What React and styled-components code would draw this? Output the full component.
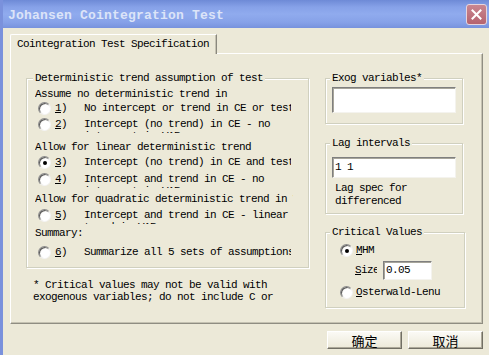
import React from 'react';
import styled, { createGlobalStyle } from 'styled-components';

const GlobalStyle = createGlobalStyle`
  html, body {
    margin: 0;
    padding: 0;
    background: #ece9d8;
  }
  body {
    font-family: "Liberation Mono", "Noto Sans CJK SC", monospace;
    font-size: 11px;
    letter-spacing: -0.6px;
    color: #000;
  }
  * {
    box-sizing: border-box;
  }
`;

const Window = styled.div`
  width: 489px;
  height: 355px;
  overflow: hidden;
  border-left: 3px solid #7a91dc;
  display: flex;
  flex-direction: column;
  background: #ece9d8;
`;

const TitleBar = styled.div`
  height: 28px;
  flex: none;
  display: flex;
  align-items: center;
  justify-content: space-between;
  padding: 2px 2px 0 5px;
  background: linear-gradient(to bottom, #6e8ad6 0%, #86a1e8 25%, #90abee 50%, #86a1e8 80%, #7792dd 100%);
`;

const Title = styled.div`
  font-size: 13px;
  font-weight: bold;
  letter-spacing: 0.2px;
  color: #dce4f8;
`;

const CloseButton = styled.div`
  width: 21px;
  height: 21px;
  margin-top: -1px;
  border: 1px solid #e6d4dc;
  border-radius: 3px;
  background: linear-gradient(to bottom, #c98690, #b5636f);
  display: flex;
  align-items: center;
  justify-content: center;
`;

const Body = styled.div`
  flex: 1;
  display: flex;
  flex-direction: column;
  padding: 6px 0 0 7px;
`;

const TabStrip = styled.div`
  display: flex;
`;

const Tab = styled.div`
  position: relative;
  z-index: 1;
  width: 207px;
  height: 20px;
  margin-bottom: -1px;
  padding: 3px 0 0 6px;
  line-height: 12px;
  background: #ece9d8;
  border-top: 1px solid #fff;
  border-left: 1px solid #fff;
  border-right: 1px solid #8a887e;
  border-top-left-radius: 2px;
  box-shadow: inset -1px 0 0 #c5c2b2;
`;

const Panel = styled.div`
  width: 473px;
  height: 271px;
  border-top: 1px solid #fff;
  border-left: 1px solid #fff;
  border-right: 1px solid #8f8d82;
  border-bottom: 1px solid #8f8d82;
  box-shadow: inset -1px -1px 0 #c5c2b2;
  padding: 24px 0 0 15px;
  display: grid;
  grid-template-columns: 283px 140px;
  column-gap: 16px;
  align-items: start;
`;

const Column = styled.div`
  display: flex;
  flex-direction: column;
  align-items: flex-start;
`;

const Group = styled.div`
  width: ${p => p.$w}px;
  margin-top: ${p => p.$mt || 0}px;
  padding: 0 ${p => p.$px}px ${p => p.$pb}px;
  border: 1px solid #d0d0bf;
  box-shadow: inset 1px 1px 0 #fff, 1px 1px 0 #fff;
  display: flex;
  flex-direction: column;
  align-items: flex-start;
`;

const Legend = styled.div`
  height: 14px;
  line-height: 14px;
  margin: -8px 0 0 -2px;
  padding: 0 2px;
  background: #ece9d8;
`;

const Heading = styled.div`
  width: 258px;
  height: 14px;
  line-height: 14px;
  margin-top: ${p => p.$mt}px;
  white-space: nowrap;
  overflow: hidden;
`;

const Option = styled.div`
  display: flex;
  align-items: flex-start;
  height: ${p => p.$h}px;
  margin-top: ${p => p.$mt}px;
  margin-left: ${p => p.$ml ?? 3}px;
`;

const Radio = styled.div`
  width: 13px;
  height: 13px;
  flex: none;
  border-radius: 50%;
  border: 1px solid;
  border-color: #8c8c8c #f4f4f4 #f4f4f4 #8c8c8c;
  background: radial-gradient(circle at 60% 60%, #fff 0 45%, #e4e2da 80%);
  box-shadow: inset 1px 1px 0 #5a5a5a;
  display: flex;
  align-items: center;
  justify-content: center;

  &::after {
    content: "";
    display: ${p => (p.$checked ? 'block' : 'none')};
    width: 4px;
    height: 4px;
    margin: 1px 0 0 1px;
    border-radius: 50%;
    background: #000;
  }
`;

const Key = styled.div`
  width: 29px;
  flex: none;
  margin-left: 4px;
  line-height: 12px;
`;

const Desc = styled.div`
  width: 207px;
  height: 100%;
  overflow: hidden;
`;

const DescText = styled.div`
  width: 216px;
  line-height: 12px;
`;

const Label = styled.div`
  line-height: 13px;
  margin-left: 3px;
`;

const SizeLabel = styled.div`
  width: 22px;
  overflow: hidden;
  white-space: nowrap;
  line-height: 19px;
  margin: 0 6px 0 23px;
`;

const Field = styled.div`
  width: ${p => (p.$w ? `${p.$w}px` : '100%')};
  height: ${p => p.$h}px;
  margin-top: ${p => p.$mt || 0}px;
  padding: 0 0 0 2px;
  line-height: ${p => p.$h - 2}px;
  background: #fff;
  border: 1px solid;
  border-color: #7f7f7f #f4f3ee #f4f3ee #7f7f7f;
  box-shadow: inset 1px 1px 0 #a7a59a;
`;

const Note = styled.div`
  margin: ${p => p.$mt}px 0 0 ${p => p.$ml}px;
  line-height: 13px;
`;

const Footnote = styled.div`
  width: 276px;
  height: 24px;
  margin: 11px 0 0 7px;
  overflow: hidden;
  line-height: 12px;
`;

const ButtonRow = styled.div`
  width: 473px;
  margin-top: 7px;
  display: flex;
  justify-content: flex-end;
  gap: 6px;
`;

const Button = styled.div`
  width: 75px;
  height: 18px;
  display: flex;
  align-items: center;
  justify-content: center;
  font-size: 13px;
  letter-spacing: 0;
  background: linear-gradient(to bottom, #fbfaf5, #ece9d8);
  border: 1px solid;
  border-color: #fff #716f64 #716f64 #fff;
  box-shadow: inset -1px -1px 0 #aca899;
`;

// rows of the trend group; h = visible height of the clipped static text
const options = [
  { type: 'head', text: 'Assume no deterministic trend in', mt: 2 },
  { type: 'opt', key: '1', text: 'No intercept or trend in CE or test VAR', h: 12, mt: 1 },
  { type: 'opt', key: '2', text: 'Intercept (no trend) in CE - no intercept in VAR', h: 15, mt: 4 },
  { type: 'head', text: 'Allow for linear deterministic trend', mt: 7 },
  { type: 'opt', key: '3', text: 'Intercept (no trend) in CE and test VAR', h: 12, mt: 2, checked: true },
  { type: 'opt', key: '4', text: 'Intercept and trend in CE - no intercept in VAR', h: 15, mt: 5 },
  { type: 'head', text: 'Allow for quadratic deterministic trend in VAR', mt: 4 },
  { type: 'opt', key: '5', text: 'Intercept and trend in CE - linear trend in VAR', h: 15, mt: 3 },
  { type: 'head', text: 'Summary:', mt: 2 },
  { type: 'opt', key: '6', text: 'Summarize all 5 sets of assumptions', h: 12, mt: 6 },
];

const CloseIcon = () => (
  <svg width="11" height="11" viewBox="0 0 11 11">
    <path d="M1.5 1.5 L9.5 9.5 M9.5 1.5 L1.5 9.5" stroke="#fff" strokeWidth="2" strokeLinecap="square" />
  </svg>
);

const App = () => {
  return (
    <Window>
      <GlobalStyle />
      <TitleBar>
        <Title>Johansen Cointegration Test</Title>
        <CloseButton>
          <CloseIcon />
        </CloseButton>
      </TitleBar>
      <Body>
        <TabStrip>
          <Tab>Cointegration Test Specification</Tab>
        </TabStrip>
        <Panel>
          <Column>
            <Group $w={283} $px={8} $pb={9}>
              <Legend>Deterministic trend assumption of test</Legend>
              {options.map((o, i) =>
                o.type === 'head' ? (
                  <Heading key={i} $mt={o.mt}>{o.text}</Heading>
                ) : (
                  <Option key={i} $h={o.h} $mt={o.mt}>
                    <Radio $checked={o.checked} />
                    <Key><u>{o.key}</u>)</Key>
                    <Desc>
                      <DescText>{o.text}</DescText>
                    </Desc>
                  </Option>
                )
              )}
            </Group>
            <Footnote>
              * Critical values may not be valid with exogenous variables; do not include C or trend.
            </Footnote>
          </Column>
          <Column>
            <Group $w={138} $px={6} $pb={10}>
              <Legend>Exog variables*</Legend>
              <Field $h={26} $mt={2} />
            </Group>
            <Group $w={138} $px={6} $pb={5} $mt={19}>
              <Legend>Lag intervals</Legend>
              <Field $h={21} $mt={7}>1 1</Field>
              <Note $mt={4} $ml={3}>Lag spec for<br />differenced</Note>
            </Group>
            <Group $w={140} $px={6} $pb={8} $mt={18}>
              <Legend>Critical Values</Legend>
              <Option $h={13} $mt={5} $ml={8}>
                <Radio $checked />
                <Label><u>M</u>HM</Label>
              </Option>
              <Option $h={19} $mt={4} $ml={0}>
                <SizeLabel><u>S</u>ize</SizeLabel>
                <Field $w={49} $h={19}>0.05</Field>
              </Option>
              <Option $h={13} $mt={6} $ml={8}>
                <Radio />
                <Label><u>O</u>sterwald-Lenu</Label>
              </Option>
            </Group>
          </Column>
        </Panel>
        <ButtonRow>
          <Button>确定</Button>
          <Button>取消</Button>
        </ButtonRow>
      </Body>
    </Window>
  );
};

export default App;
